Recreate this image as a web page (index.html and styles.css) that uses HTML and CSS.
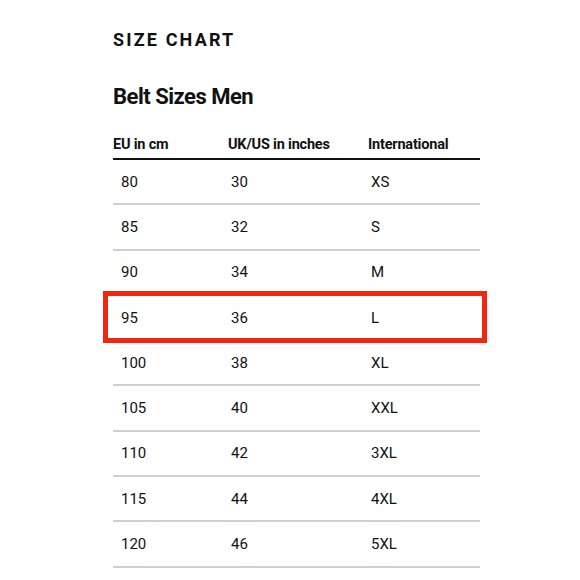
FILE: index.html
```html
<!DOCTYPE html>
<html>
<head>
<meta charset="utf-8">
<link rel="stylesheet" href="styles.css">
</head>
<body>
<main class="page">
  <h1 class="eyebrow">SIZE CHART</h1>
  <h2 class="title">Belt Sizes Men</h2>
  <div class="table">
    <div class="row head">
      <div class="c1">EU in cm</div>
      <div class="c2">UK/US in inches</div>
      <div class="c3">International</div>
    </div>
    <div class="row"><div class="c1">80</div><div class="c2">30</div><div class="c3">XS</div></div>
    <div class="row"><div class="c1">85</div><div class="c2">32</div><div class="c3">S</div></div>
    <div class="row"><div class="c1">90</div><div class="c2">34</div><div class="c3">M</div></div>
    <div class="row hl"><div class="c1">95</div><div class="c2">36</div><div class="c3">L</div></div>
    <div class="row"><div class="c1">100</div><div class="c2">38</div><div class="c3">XL</div></div>
    <div class="row"><div class="c1">105</div><div class="c2">40</div><div class="c3">XXL</div></div>
    <div class="row"><div class="c1">110</div><div class="c2">42</div><div class="c3">3XL</div></div>
    <div class="row"><div class="c1">115</div><div class="c2">44</div><div class="c3">4XL</div></div>
    <div class="row"><div class="c1">120</div><div class="c2">46</div><div class="c3">5XL</div></div>
  </div>
</main>
</body>
</html>
```
FILE: styles.css
```css
html, body {
  margin: 0;
  padding: 0;
  background: #fff;
}
body {
  font-family: Roboto, "Liberation Sans", sans-serif;
  color: #111;
}
.page {
  width: 367px;
  margin-left: 113px;
  padding-top: 29px;
}
.eyebrow {
  margin: 0;
  font-size: 18px;
  line-height: 22px;
  font-weight: 700;
  letter-spacing: 0.12em;
}
.title {
  margin: 0;
  margin-top: 32px;
  font-size: 22px;
  line-height: 28px;
  font-weight: 700;
  letter-spacing: -0.5px;
}
.table {
  margin-top: 19px;
}
.row {
  display: grid;
  grid-template-columns: 115px 140px 1fr;
  height: 43.3px;
  align-items: center;
  border-bottom: 2px solid #d0d0d0;
  font-size: 15px;
  position: relative;
}
.row > div {
  padding-left: 3px;
}
.row > .c1 {
  padding-left: 8px;
}
.row.head {
  border-bottom: 2px solid #111;
  font-size: 14.5px;
  font-weight: 700;
  letter-spacing: -0.2px;
  align-items: end;
  padding-bottom: 5px;
  box-sizing: border-box;
  height: 30px;
}
.row.head > div {
  padding-left: 0;
}
.row.hl::after {
  content: "";
  position: absolute;
  left: -10px;
  right: -7px;
  top: -5px;
  bottom: -4px;
  border: 5px solid #f2260f;
  pointer-events: none;
}
```
